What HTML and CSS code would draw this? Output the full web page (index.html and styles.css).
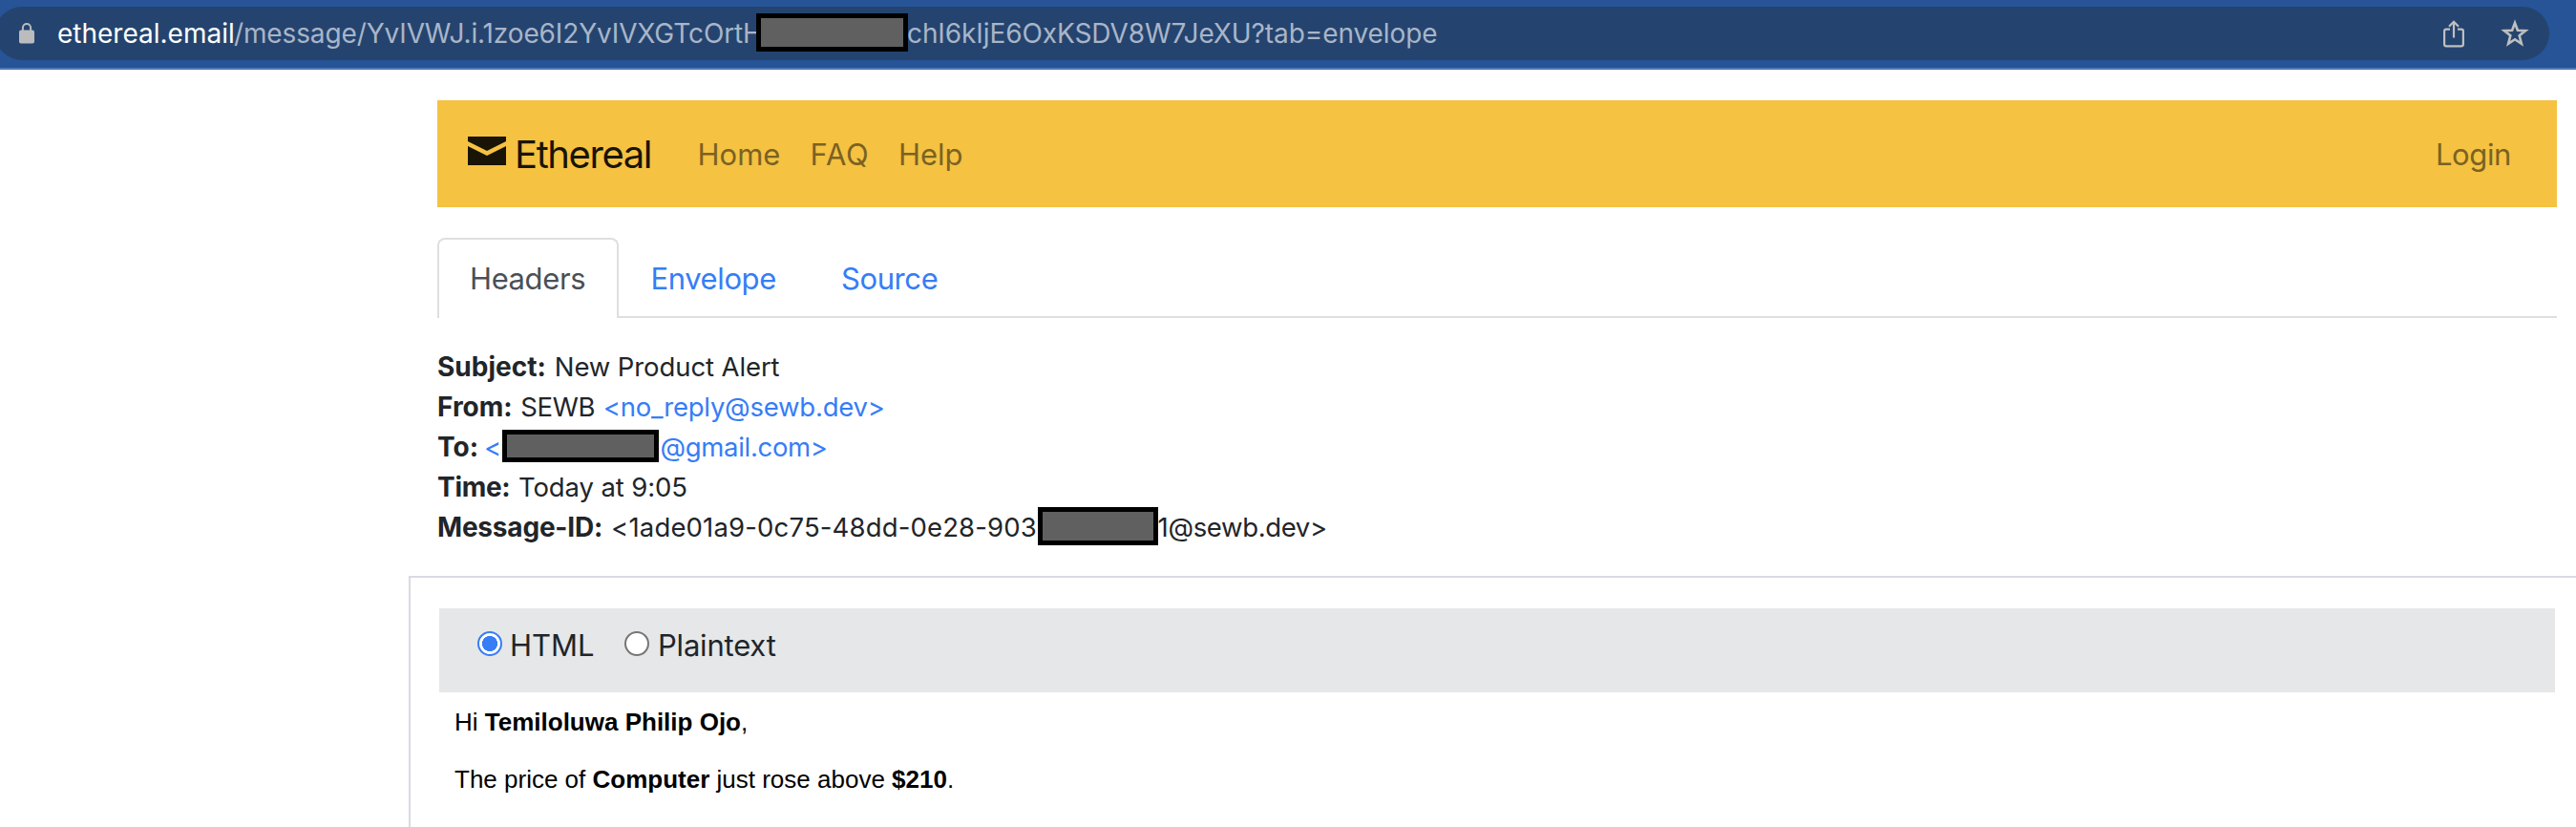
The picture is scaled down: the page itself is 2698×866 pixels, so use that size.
FILE: index.html
```
<!DOCTYPE html>
<html lang="en">
<head>
<meta charset="utf-8">
<title>Ethereal</title>
<link rel="stylesheet" href="styles.css">
</head>
<body>
<header class="browser-bar">
  <div class="omnibox">
    <svg class="lock" width="16" height="22" viewBox="0 0 16 22"><path d="M3.900 9V5.200a4.100 4.100 0 0 1 8.200 0V9" fill="none" stroke="#bbbcbe" stroke-width="2"/><rect y="7.5" width="16" height="14" rx="2" fill="#bbbcbe"/></svg>
    <div class="url"><span class="host">ethereal.email</span><span class="path">/message/YvIVWJ.i.1zoe6I2YvIVXGTcOrtH</span><span class="redact redact-url"></span><span class="path-end">chI6kIjE6OxKSDV8W7JeXU?tab=envelope</span></div>
    <svg class="share" width="22" height="30" viewBox="0 0 22 30" fill="none" stroke="#bfbfbf" stroke-width="2.2"><path d="M7 9.600H3.300A2.200 2.200 0 0 0 1.100 11.800V25.200A2.200 2.200 0 0 0 3.300 27.400H18.700A2.200 2.200 0 0 0 20.900 25.200V11.800A2.200 2.200 0 0 0 18.700 9.600H15M11 18.500V1.800M6 6.800L11 1.800L16 6.800"/></svg>
    <svg class="star" width="30" height="30" viewBox="0 0 30 30" fill="none" stroke="#bfbfbf" stroke-width="2.6"><path d="M15 4L17.900 11.700L26.200 12.100L19.700 17.300L21.900 25.800L15 21.200L8.100 25.800L10.300 17.300L3.800 12.100L12.100 11.700Z"/></svg>
  </div>
</header>
<main class="page">
  <nav class="navbar">
    <a class="brand"><svg width="40" height="30" viewBox="0 0 40 30"><path d="M0 0H40V5L20 15L0 5ZM0 10L20 20L40 10V30H0Z" fill="#191406"/></svg><span>Ethereal</span></a>
    <a class="nav-home">Home</a>
    <a class="nav-faq">FAQ</a>
    <a class="nav-help">Help</a>
    <a class="nav-login">Login</a>
  </nav>
  <div class="tabs">
    <a class="tab active">Headers</a>
    <a class="tab">Envelope</a>
    <a class="tab">Source</a>
  </div>
  <section class="details">
    <div class="row"><b>Subject:</b><span class="subject">New Product Alert</span></div>
    <div class="row"><b>From:</b><span class="sender">SEWB</span><a class="address">&lt;no_reply@sewb.dev&gt;</a></div>
    <div class="row"><b>To:</b><a class="open">&lt;</a><span class="redact redact-to"></span><a class="domain">@gmail.com&gt;</a></div>
    <div class="row"><b class="time-label">Time:</b><span class="time">Today at 9:05</span></div>
    <div class="row"><b class="id-label">Message-ID:</b><span class="id">&lt;1ade01a9-0c75-48dd-0e28-903</span><span class="redact redact-id"></span><span class="id-end">1@sewb.dev&gt;</span></div>
  </section>
</main>
<section class="panel">
  <div class="format">
    <i class="radio checked"></i><span class="html">HTML</span>
    <i class="radio"></i><span class="plain">Plaintext</span>
  </div>
  <div class="message">
    <p>Hi <b>Temiloluwa Philip Ojo</b>,</p>
    <p>The price of <b>Computer</b> just rose above <b>$210</b>.</p>
  </div>
</section>
</body>
</html>
```
FILE: styles.css
```
* { box-sizing: border-box; }
body { margin: 0; height: 866px; overflow: hidden; background: #fff; color: #212529; font-family: Inter, "Liberation Sans", sans-serif; display: flex; flex-direction: column; }
svg { display: block; flex: none; }
.browser-bar { flex: none; height: 73px; background: #265497; border-bottom: 2px solid #4f77b2; padding-top: 7px; }
.omnibox { height: 56px; width: 2675px; margin-left: -5px; border-radius: 28px; background: #24446f; display: flex; align-items: center; padding: 0 21px 0 25px; }
.url { display: flex; align-items: center; flex: 1; margin-left: 24px; font-size: 28px; line-height: 56px; color: #a9b5c8; white-space: nowrap; }
.host { color: #fff; width: 185px; }
.path { width: 547px; letter-spacing: -.13px; }
.path-end { margin-left: -1px; letter-spacing: -.09px; }
.share { margin: 2px 38px 0 0; }
.redact { position: relative; flex: none; background: #606060; border: 5px solid #000; }
.redact-url { width: 159px; height: 40px; margin-top: -2px; }
.page { flex: none; width: 2220px; margin-left: 458px; }
.navbar { height: 112px; margin-top: 32px; background: #f5c242; padding: 0 48px 0 32px; display: flex; align-items: center; font-size: 31px; color: #7b6222; }
.brand { display: flex; align-items: center; width: 240.500px; font-size: 40px; letter-spacing: -1.4px; color: #191406; }
.brand svg { margin: -6px 9px 0 0; }
.nav-home { width: 118px; }
.nav-faq { width: 92.500px; letter-spacing: .9px; }
.nav-login { margin-left: auto; letter-spacing: -.37px; }
.tabs { display: flex; height: 84px; margin-top: 32px; border-bottom: 2px solid #dedfe0; font-size: 31px; line-height: 85px; letter-spacing: -.4px; color: #367df6; }
.tab { padding: 0 33.500px; height: 84px; }
.tab.active { width: 190px; background: #fff; color: #495057; border: 2px solid #dedfe0; border-bottom: 0; border-radius: 8px 8px 0 0; padding: 0 32px; line-height: 81px; }
.tab:nth-child(2) { width: 199.500px; }
.details { margin-top: 30px; font-size: 27.500px; }
.row { display: flex; height: 42px; line-height: 42px; align-items: center; white-space: nowrap; }
.row b { font-size: 28px; font-weight: 700; }
.row a { color: #367df6; }
.subject { margin-left: 9px; letter-spacing: -.1px; }
.sender { margin-left: 8.500px; width: 86.500px; letter-spacing: -.3px; }
.row .address { letter-spacing: -.22px; }
.open { margin-left: 6px; width: 18.500px; }
.redact-to { width: 164px; height: 34px; margin-top: -2px; }
.row .domain { margin-left: 2px; letter-spacing: -.32px; }
.time-label { letter-spacing: -.3px; }
.time { margin-left: 8.500px; letter-spacing: -.1px; }
.id-label { letter-spacing: -.2px; }
.id { margin-left: 9px; width: 446.500px; letter-spacing: .16px; }
.redact-id { width: 126px; height: 40px; margin-top: -2px; }
.id-end { letter-spacing: -.35px; }
.panel { flex: 1; margin: 30px 0 0 428px; border: solid #dad9e5; border-width: 2px 0 0 2px; padding: 32px 22px 0 30px; }
.format { height: 88px; background: #e6e7e9; padding: 15px 40px 0; display: flex; font-size: 31px; line-height: 48px; }
.radio { width: 26px; height: 26px; margin-top: 9px; background: #fff; border: 2px solid #767676; border-radius: 50%; }
.radio.checked { border-color: #367df6; background: radial-gradient(circle, #367df6 7.800px, #fff 8.300px); }
.html { margin-left: 8px; width: 120px; }
.plain { margin-left: 9px; letter-spacing: -.2px; }
.message { padding: 16px; color: #000; font: 26px/30px "Liberation Sans", sans-serif; letter-spacing: 0; }
.message p { margin: 0 0 30px; }
```
